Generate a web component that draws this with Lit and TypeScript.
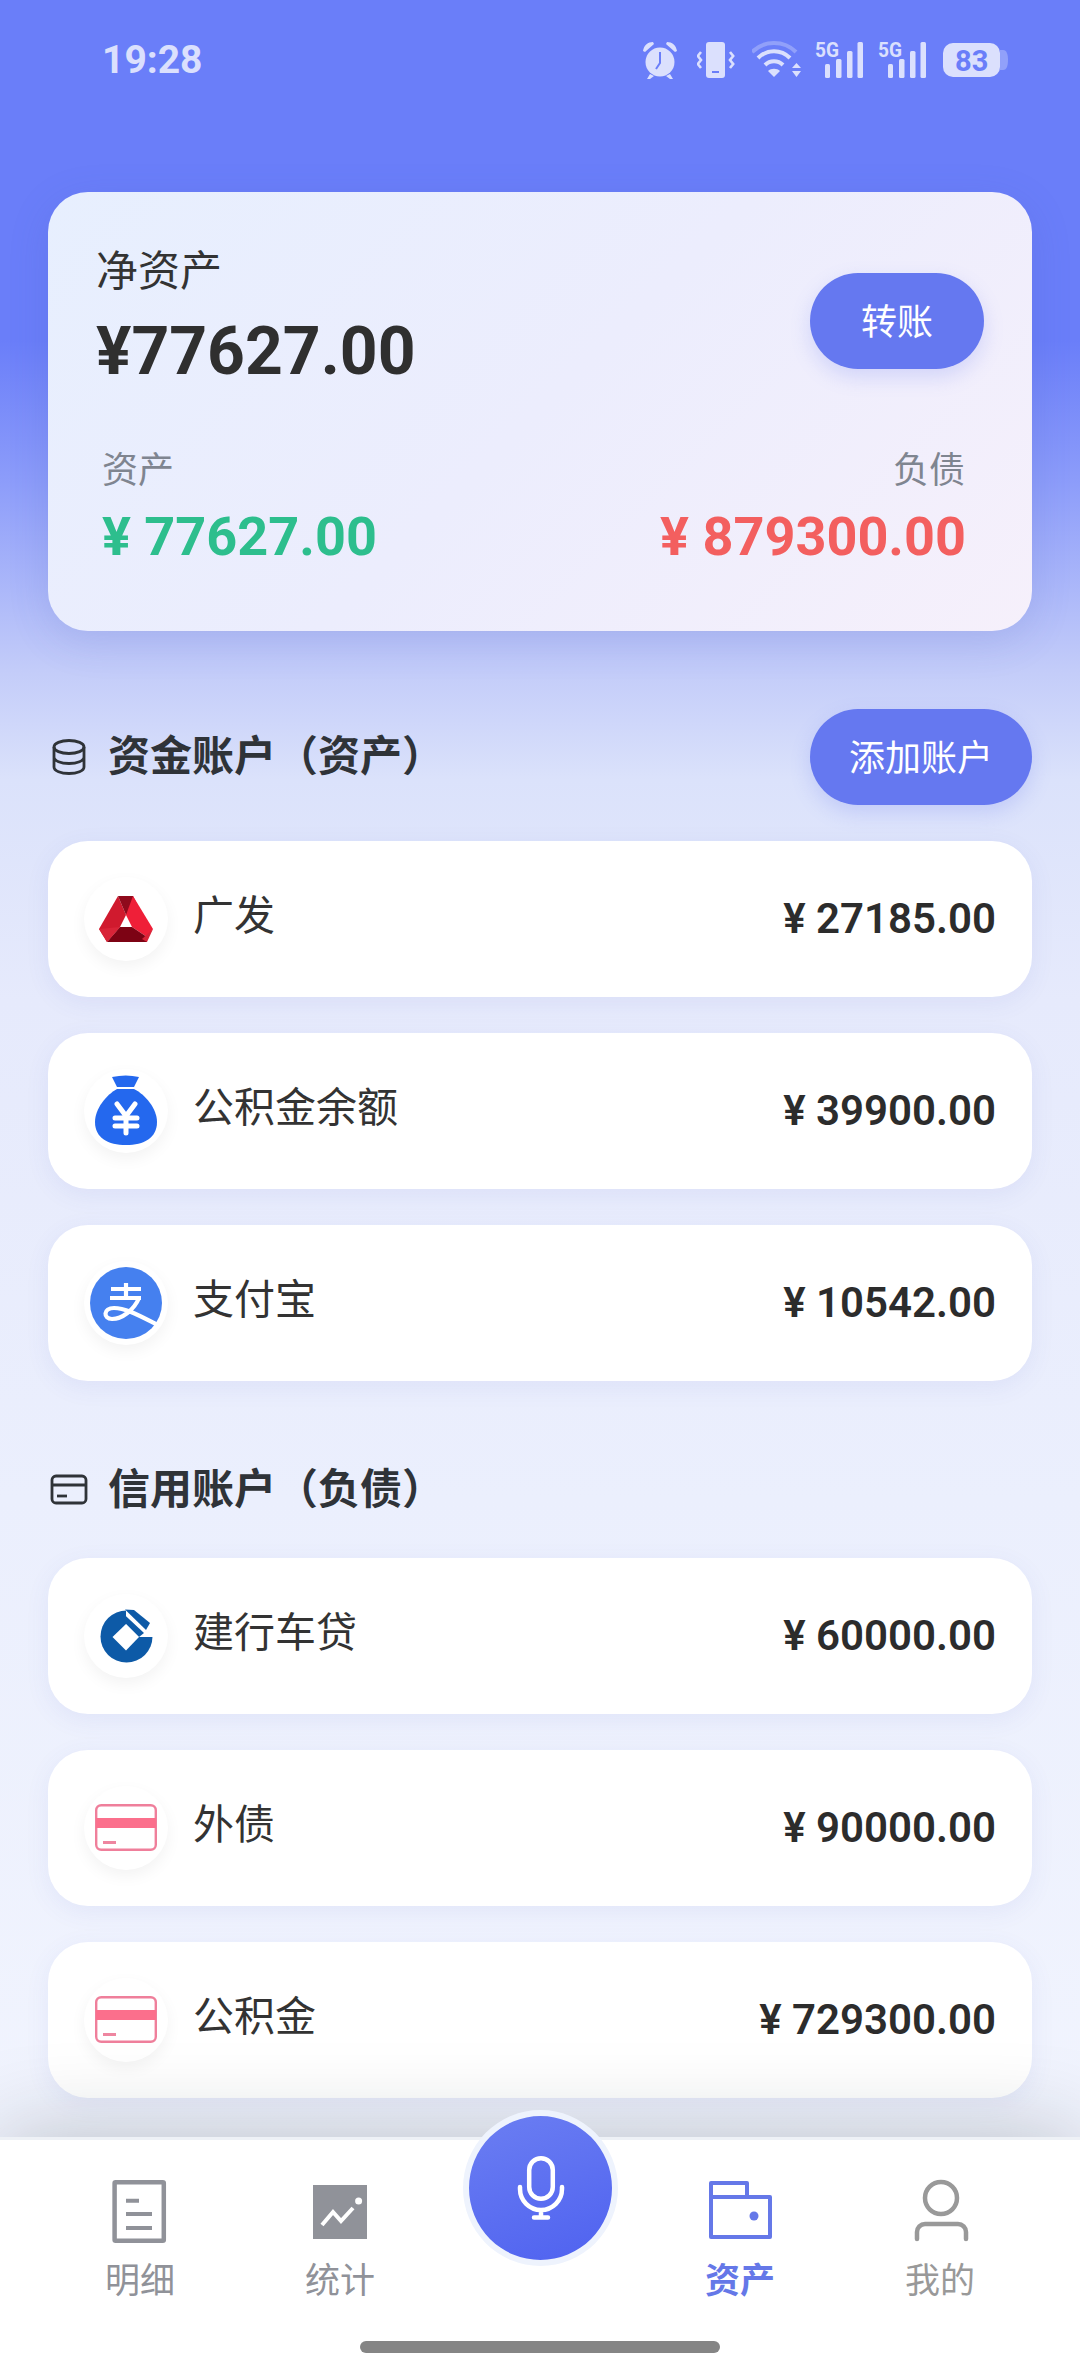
import { LitElement, html, css, svg } from "lit";
import { customElement } from "lit/decorators.js";

const gf = svg`
  <polygon points="34,19 15,52 23,65 36,50 42,38" fill="#d01a2e"/>
  <polygon points="34,19 49,19 55,31 42,38" fill="#8f0a1c"/>
  <polygon points="49,19 69,52 63,60 48,50 42,38" fill="#ef1f38"/>
  <polygon points="36,50 48,50 63,60 63,65 23,65" fill="#7d0314"/>
  <polygon points="15,52 36,50 23,65" fill="#d92438"/>
  <polygon points="69,52 63,65 58,62" fill="#d92438"/>
`;
const bag = svg`
  <path d="M28 8 Q42 5 55 8 L50 18 H33 Z" fill="#2468ee"/>
  <path d="M33 20 H50 C62 26 73 40 73 53 C73 69 60 76 42 76 C24 76 11 69 11 53 C11 40 22 26 33 20 Z" fill="#2468ee"/>
  <path d="M33 35 L42 47 L51 35 M42 47 V64 M31 49 H53 M31 57 H53" fill="none" stroke="#fff" stroke-width="5" stroke-linecap="round" stroke-linejoin="round"/>
`;
const alipay = svg`
  <circle cx="42" cy="42" r="36" fill="#4580ef"/>
  <path d="M42 22 V37 M27 28 H57 M26 37 H57" fill="none" stroke="#fff" stroke-width="4.2"/>
  <path d="M55 37 C50 49 38 58 28 58 C19 58 19 47 30 47 C42 47 56 55 74 64" fill="none" stroke="#fff" stroke-width="4.2"/>
`;
const ccb = svg`
  <circle cx="42.5" cy="42.5" r="26" fill="#0d5aa7"/>
  <polygon points="42,14 72,14 72,43 55,43 42,30" fill="#fff"/>
  <polygon points="37,17.5 60,39 55,43 42,30" fill="#0d5aa7"/>
  <polygon points="41,15.5 50,16 66,29 62,36" fill="#0d5aa7"/>
  <polygon points="42,30 55,43 42,56.5 28.5,43" fill="#fff"/>
`;
const debt = svg`
  <rect x="12.2" y="19.2" width="59.6" height="44.6" rx="5" fill="#fff" stroke="#ef7f9b" stroke-width="2.4"/>
  <rect x="12" y="32" width="60" height="10" fill="#fb6f8c"/>
  <rect x="19" y="55" width="13" height="3" fill="#ee86a0"/>
`;

const funds = [
  { name: "广发", value: "¥ 27185.00", icon: gf },
  { name: "公积金余额", value: "¥ 39900.00", icon: bag },
  { name: "支付宝", value: "¥ 10542.00", icon: alipay },
];
const credits = [
  { name: "建行车贷", value: "¥ 60000.00", icon: ccb },
  { name: "外债", value: "¥ 90000.00", icon: debt },
  { name: "公积金", value: "¥ 729300.00", icon: debt },
];

const signal = svg`
  <text x="0" y="16" font-family="Roboto" font-weight="700" font-size="20" fill="#dbe0fd" textLength="24" lengthAdjust="spacingAndGlyphs">5G</text>
  <rect x="10" y="23" width="5" height="14" rx="1.5" fill="#dbe0fd"/>
  <rect x="21" y="18" width="5.5" height="19" rx="1.5" fill="#dbe0fd"/>
  <rect x="32" y="10" width="5.5" height="27" rx="1.5" fill="#dbe0fd"/>
  <rect x="42.5" y="1" width="5.5" height="36" rx="1.5" fill="#dbe0fd"/>
`;

@customElement("app-root")
export class AppRoot extends LitElement {
  static styles = css`
    :host {
      display: block;
      width: 1080px;
      height: 2374px;
      overflow: hidden;
      font-family: Roboto, "Noto Sans CJK SC", sans-serif;
    }
    .page {
      height: 2374px;
      display: flex;
      flex-direction: column;
      background: linear-gradient(180deg, #6a7ef9 0, #6a7ef9 340px, #8c9cfa 480px, #c3ccf9 670px, #dbe2fb 780px, #e6eafc 1000px, #ebeffd 1500px, #f1f4fe 2137px);
    }
    .status {
      height: 120px;
      flex: none;
      box-sizing: border-box;
      padding: 41px 72px 0 102px;
      display: flex;
      align-items: flex-start;
      justify-content: space-between;
      color: #dbe0fd;
    }
    .time {
      font-size: 39px;
      font-weight: 700;
      line-height: 38px;
    }
    .icons {
      display: flex;
      gap: 13px;
    }
    .icons svg {
      display: block;
      height: 38px;
    }
    .icons svg.sig {
      width: 50px;
      height: 44px;
      margin-top: -6px;
      margin-bottom: 0;
    }
    .content {
      flex: 1;
      min-height: 0;
      overflow: hidden;
      box-sizing: border-box;
      padding: 72px 48px 0;
    }
    .card {
      box-sizing: border-box;
      height: 439px;
      padding: 58px 48px 0 48px;
      border-radius: 40px;
      background: linear-gradient(135deg, #e7effe 0%, #ecedfd 50%, #f6f0fb 100%);
      box-shadow: 0 10px 40px rgba(70, 85, 180, 0.16);
    }
    .top {
      display: flex;
      align-items: center;
      justify-content: space-between;
    }
    .net-label {
      font-size: 42px;
      line-height: 44px;
      color: #333;
      font-weight: 400;
    }
    .net {
      margin-top: 18px;
      font-size: 66px;
      line-height: 80px;
      font-weight: 700;
      color: #2f2f2f;
    }
    .btn {
      box-sizing: border-box;
      height: 96px;
      padding-bottom: 5px;
      border-radius: 48px;
      background: #6578f0;
      color: #fff;
      font-size: 36px;
      display: flex;
      align-items: center;
      justify-content: center;
      box-shadow: 0 8px 20px rgba(101, 120, 240, 0.22);
    }
    .btn.transfer {
      width: 174px;
    }
    .btn.add {
      width: 222px;
    }
    .totals {
      display: flex;
      justify-content: space-between;
      margin: 59px 18px 0 6px;
    }
    .col.right {
      text-align: right;
    }
    .col.right .col-label {
      padding-right: 1px;
    }
    .col-label {
      font-size: 36px;
      line-height: 40px;
      color: #7f8590;
    }
    .col-value {
      margin-top: 16px;
      font-size: 54px;
      line-height: 60px;
      font-weight: 700;
    }
    .green {
      color: #2dbe8d;
    }
    .red {
      color: #f35f5f;
    }
    .head {
      display: flex;
      align-items: center;
      justify-content: space-between;
    }
    .head.first {
      height: 96px;
      margin: 78px 0 36px;
    }
    .head.second {
      height: 56px;
      margin: 81px 0 40px;
    }
    .title {
      display: flex;
      align-items: center;
      gap: 18px;
      font-size: 42px;
      font-weight: 700;
      color: #2f3338;
      line-height: 56px;
    }
    .title svg {
      display: block;
      width: 42px;
      height: 42px;
    }
    .rows {
      display: flex;
      flex-direction: column;
      gap: 36px;
    }
    .row {
      height: 156px;
      box-sizing: border-box;
      padding: 0 36px;
      display: flex;
      align-items: center;
      background: #fff;
      border-radius: 40px;
      box-shadow: 0 6px 24px rgba(80, 95, 190, 0.08);
    }
    .badge {
      width: 84px;
      height: 84px;
      flex: none;
      border-radius: 50%;
      background: #fff;
      box-shadow: 0 6px 16px rgba(0, 0, 0, 0.05);
    }
    .badge svg {
      display: block;
      width: 84px;
      height: 84px;
    }
    .name {
      flex: 1;
      margin-left: 25px;
      padding-bottom: 6px;
      font-size: 41px;
      line-height: 48px;
      color: #333;
    }
    .value {
      font-size: 42px;
      line-height: 48px;
      font-weight: 600;
      color: #2c2c2c;
    }
    nav {
      position: relative;
      z-index: 2;
      flex: none;
      height: 237px;
      box-sizing: border-box;
      padding: 36px 40px 0;
      display: grid;
      grid-template-columns: repeat(5, 1fr);
      background: #fff;
      border-top: 3px solid #eef1f6;
      box-shadow: 0 0 90px rgba(20, 30, 30, 0.25);
    }
    .tab {
      display: flex;
      flex-direction: column;
      align-items: center;
      gap: 14px;
      color: #909299;
      font-size: 35px;
      line-height: 44px;
    }
    .tab svg {
      display: block;
      width: 70px;
      height: 70px;
    }
    .tab.active {
      color: #6578e8;
      font-weight: 700;
    }
    .mine {
      color: #999;
    }
    .mic {
      position: absolute;
      left: 463px;
      top: -30px;
      width: 155px;
      height: 156px;
      box-sizing: border-box;
      border: 6px solid #eef3fd;
      border-radius: 50%;
      background: linear-gradient(160deg, #6b7ef2 0%, #4f62f0 100%);
      display: flex;
      align-items: center;
      justify-content: center;
    }
    .mic svg {
      display: block;
      width: 100px;
      height: 116px;
    }
    .indicator {
      position: absolute;
      left: 360px;
      top: 201px;
      width: 360px;
      height: 12px;
      border-radius: 6px;
      background: #858585;
    }
  `;

  private rows(items: typeof funds) {
    return html`<div class="rows">
      ${items.map(
        (r) => html`<div class="row">
          <div class="badge"><svg viewBox="0 0 84 84">${r.icon}</svg></div>
          <div class="name">${r.name}</div>
          <div class="value">${r.value}</div>
        </div>`
      )}
    </div>`;
  }

  render() {
    return html`<div class="page">
      <div class="status">
        <div class="time">19:28</div>
        <div class="icons">
          <svg viewBox="0 0 42 38" style="width:42px">
            <circle cx="18" cy="21" r="14.5" fill="#dbe0fd"/>
            <path d="M1 10 C2 4 6 1 11 1 L12 3 L3 11 Z M35 10 C34 4 30 1 25 1 L24 3 L33 11 Z" fill="#dbe0fd"/>
            <path d="M8 33 L5 38 H8 L12 35 Z M28 33 L31 38 H28 L24 35 Z" fill="#dbe0fd"/>
            <path d="M18 11 V22 L14 28" fill="none" stroke="#6a7ef9" stroke-width="2"/>
          </svg>
          <svg viewBox="0 0 42 38" style="width:42px">
            <rect x="9" y="1" width="19" height="36" rx="3" fill="#dbe0fd"/>
            <rect x="15" y="30" width="7" height="2" fill="#6a7ef9"/>
            <path d="M4 11 L0.8 15 L4 19 L0.8 23 L4 27 M33 11 L36.2 15 L33 19 L36.2 23 L33 27" fill="none" stroke="#dbe0fd" stroke-width="2.6"/>
          </svg>
          <svg viewBox="0 0 50 38" style="width:50px">
            <path d="M0 11 C12 -1 32 -1 44 11" fill="none" stroke="#dbe0fd" stroke-opacity="0.35" stroke-width="4"/>
            <path d="M6 17 C15 8 29 8 38 17 M13 24 C18 19 26 19 31 24" fill="none" stroke="#dbe0fd" stroke-width="4"/>
            <path d="M16 30 C19 27 25 27 28 30 L22 36 Z" fill="#dbe0fd"/>
            <path d="M40 27 L44.5 22 L49 27 Z M40 30 H49 L44.5 36 Z" fill="#dbe0fd"/>
          </svg>
          <svg class="sig" viewBox="0 -6 50 44">${signal}</svg>
          <svg class="sig" viewBox="0 -6 50 44">${signal}</svg>
          <svg viewBox="0 0 67 38" style="width:67px">
            <rect x="2" y="2" width="57" height="34" rx="10" fill="#dbe0fd"/>
            <path d="M59 9 H62 C66 9 67 14 67 19 C67 24 66 29 62 29 H59 Z" fill="#dbe0fd" fill-opacity="0.35"/>
            <text x="14" y="29.5" font-family="Roboto" font-weight="700" font-size="29" fill="#6a7ef9">83</text>
          </svg>
        </div>
      </div>

      <div class="content">
        <div class="card">
          <div class="top">
            <div>
              <div class="net-label">净资产</div>
              <div class="net">¥77627.00</div>
            </div>
            <div class="btn transfer">转账</div>
          </div>
          <div class="totals">
            <div class="col">
              <div class="col-label">资产</div>
              <div class="col-value green">¥ 77627.00</div>
            </div>
            <div class="col right">
              <div class="col-label">负债</div>
              <div class="col-value red">¥ 879300.00</div>
            </div>
          </div>
        </div>

        <div class="head first">
          <div class="title">
            <svg viewBox="0 0 42 42">
              <ellipse cx="21" cy="11" rx="15" ry="6.5" fill="none" stroke="#2f3338" stroke-width="2.8"/>
              <path d="M6 11 V31 C6 35 13 37.5 21 37.5 C29 37.5 36 35 36 31 V11 M6 21 C6 25 13 27.5 21 27.5 C29 27.5 36 25 36 21" fill="none" stroke="#2f3338" stroke-width="2.8"/>
            </svg>
            资金账户（资产）
          </div>
          <div class="btn add">添加账户</div>
        </div>
        ${this.rows(funds)}

        <div class="head second">
          <div class="title">
            <svg viewBox="0 0 42 42">
              <rect x="4" y="7" width="34" height="27" rx="4" fill="none" stroke="#2f3338" stroke-width="2.8"/>
              <path d="M4 16 H38" stroke="#2f3338" stroke-width="2.8"/>
              <path d="M9 27 H19" stroke="#2f3338" stroke-width="2.8"/>
            </svg>
            信用账户（负债）
          </div>
        </div>
        ${this.rows(credits)}
      </div>

      <nav>
        <div class="tab">
          <svg viewBox="0 0 70 70">
            <rect x="9.6" y="6.2" width="49.2" height="58.6" rx="1" fill="none" stroke="currentColor" stroke-width="4.5"/>
            <path d="M21 24.7 H34 M21 38 H47 M21 52 H47" stroke="currentColor" stroke-width="4"/>
          </svg>
          明细
        </div>
        <div class="tab">
          <svg viewBox="0 0 70 70">
            <rect x="8" y="9" width="54" height="54" fill="currentColor"/>
            <path d="M17 49 L28 36 L36 45 L48 32" fill="none" stroke="#fff" stroke-width="4"/>
            <circle cx="53.6" cy="25" r="3.5" fill="#fff"/>
          </svg>
          统计
        </div>
        <div></div>
        <div class="tab active">
          <svg viewBox="0 0 70 70">
            <rect x="6" y="21" width="59" height="40" fill="none" stroke="currentColor" stroke-width="4" stroke-linejoin="round"/>
            <path d="M6 21 V7 H42 V21" fill="none" stroke="currentColor" stroke-width="4" stroke-linejoin="round"/>
            <circle cx="49" cy="40" r="4.5" fill="currentColor"/>
          </svg>
          资产
        </div>
        <div class="tab mine">
          <svg viewBox="0 0 70 70">
            <circle cx="36" cy="22" r="16" fill="none" stroke="currentColor" stroke-width="4.5"/>
            <path d="M12 63 V56 a8 8 0 0 1 8 -8 H53 a8 8 0 0 1 8 8 V63" fill="none" stroke="currentColor" stroke-width="4.5" stroke-linecap="round"/>
          </svg>
          我的
        </div>
        <div class="mic">
          <svg viewBox="0 0 100 116">
            <rect x="38.2" y="28.2" width="23.6" height="40.6" rx="11.8" fill="none" stroke="#fff" stroke-width="4.5"/>
            <path d="M29 57 V59 a21 21 0 0 0 42 0 V57 M50 80 V87 M43 87.5 H57" fill="none" stroke="#fff" stroke-width="4.5" stroke-linecap="round"/>
          </svg>
        </div>
        <div class="indicator"></div>
      </nav>
    </div>`;
  }
}
